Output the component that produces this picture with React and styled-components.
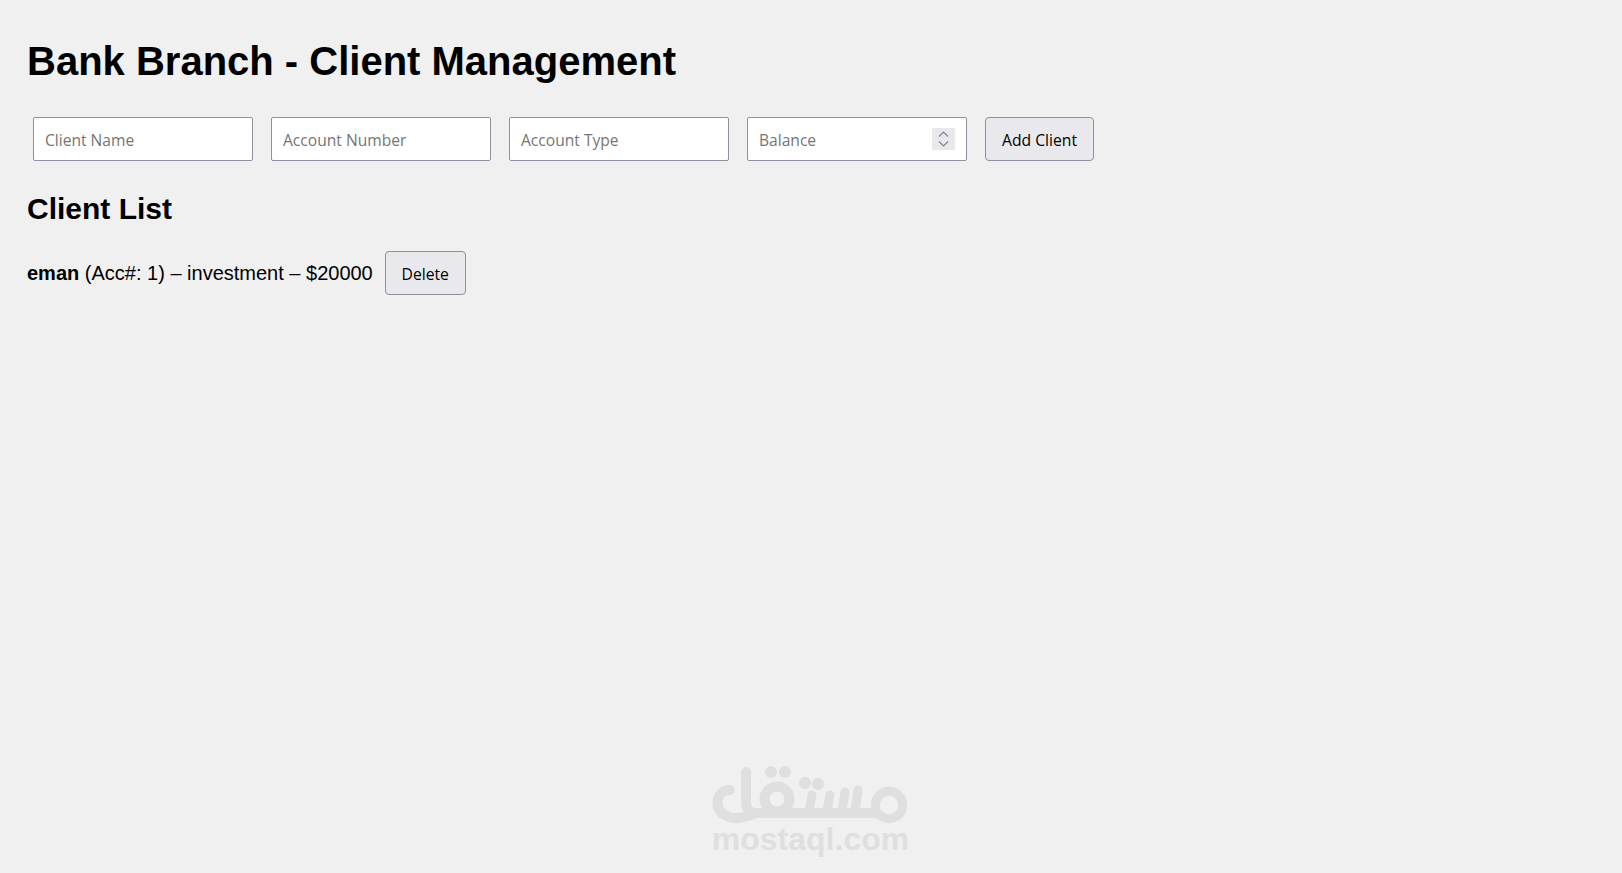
import React from 'react'
import styled, { createGlobalStyle } from 'styled-components'

const GlobalStyle = createGlobalStyle`
    html, body {
        margin: 0;
        height: 100%;
        background: #f0f0f0;
    }
    body {
        font-family: "Liberation Sans", Arial, sans-serif;
        color: #000;
    }
`

const Page = styled.div`
    min-height: 873px;
    padding: 20px 27px;
    box-sizing: border-box;
`

const Title = styled.h1`
    margin: 18px 0 33px;
    font-size: 40px;
    line-height: 46px;
    font-weight: 700;
`

const Form = styled.form`
    display: flex;
    align-items: center;
    gap: 18px;
    padding-left: 6px;
`

const InputBox = styled.div`
    position: relative;
    width: 220px;
    height: 44px;
`

const Input = styled.input`
    width: 100%;
    height: 100%;
    box-sizing: border-box;
    padding: 2px 11px 0;
    border: 1px solid #8f8f9d;
    border-radius: 2px;
    background: #fff;
    font-family: "Open Sans", "Noto Sans", sans-serif;
    font-size: 15.6px;
    outline: none;

    &::placeholder {
        color: #757575;
        opacity: 1;
    }
`

const Spinner = styled.span`
    position: absolute;
    top: 11px;
    right: 12px;
    width: 23px;
    height: 22px;
    display: flex;
    align-items: center;
    justify-content: center;
    background: #e9e9ed;
    color: #85858f;
`

const Button = styled.button`
    height: 44px;
    width: ${(props) => props.$width}px;
    padding: 2px 0 0;
    border: 1px solid #8f8f9d;
    border-radius: 4px;
    background: #e9e9ed;
    color: #000;
    font-family: "Open Sans", "Noto Sans", sans-serif;
    font-size: 15.7px;
`

const SubTitle = styled.h2`
    margin: 31px 0 25px;
    font-size: 30px;
    line-height: 34px;
    font-weight: 700;
`

const ClientRow = styled.div`
    display: flex;
    align-items: center;
    gap: 12px;
    font-size: 20px;
`

const Watermark = styled.div`
    position: absolute;
    left: 712px;
    top: 765px;
    width: 197px;
    display: flex;
    flex-direction: column;
    align-items: center;
    color: #dfdfdf;
`

const WatermarkText = styled.span`
    margin-top: -5px;
    font-size: 32px;
    line-height: 34px;
    font-weight: 700;
    white-space: nowrap;
`

const fields = ['Client Name', 'Account Number', 'Account Type']

const SpinnerIcon = () => (
    <svg width="13" height="18" viewBox="0 0 13 18" fill="none" stroke="currentColor" strokeWidth="1.2">
        <path d="M2 6.5 L6.5 2 L11 6.5" />
        <path d="M2 11.5 L6.5 16 L11 11.5" />
    </svg>
)

const MostaqlLogo = () => (
    <svg width="197" height="62" viewBox="0 0 197 62" fill="none" stroke="currentColor" strokeWidth="10" strokeLinecap="round" strokeLinejoin="round" role="img" aria-label="mostaql logo">
        <path d="M18 25 C9 25 5.5 32 5.5 38 C5.5 47 14 53 24 53 C32 53 38 50 44 48" />
        <path d="M34 7 L34 38 C34 44 38 48 44 48 L165 48" />
        <circle cx="65" cy="34" r="12.5" />
        <g fill="currentColor" stroke="none">
            <circle cx="59" cy="7" r="6" />
            <circle cx="73" cy="7" r="6" />
            <circle cx="93" cy="18" r="6" />
            <circle cx="106" cy="19" r="6" />
        </g>
        <g strokeWidth="9">
            <path d="M100 30 L97 46" />
            <path d="M118 30 L115 46" />
            <path d="M133 27 L130 46" />
            <path d="M146 25 L143 46" />
            <circle cx="177" cy="40" r="13.7" />
        </g>
    </svg>
)

const App = () => {
    return (
        <Page>
            <GlobalStyle />
            <Title>Bank Branch - Client Management</Title>
            <Form onSubmit={(e) => e.preventDefault()}>
                {fields.map((f) => (
                    <InputBox key={f}>
                        <Input placeholder={f} />
                    </InputBox>
                ))}
                <InputBox>
                    <Input placeholder="Balance" />
                    <Spinner><SpinnerIcon /></Spinner>
                </InputBox>
                <Button type="submit" $width={109}>Add Client</Button>
            </Form>
            <SubTitle>Client List</SubTitle>
            <ClientRow>
                <span><strong>eman</strong> (Acc#: 1) – investment – $20000</span>
                <Button type="button" $width={81}>Delete</Button>
            </ClientRow>
            <Watermark>
                <MostaqlLogo />
                <WatermarkText>mostaql.com</WatermarkText>
            </Watermark>
        </Page>
    )
}

export default App
